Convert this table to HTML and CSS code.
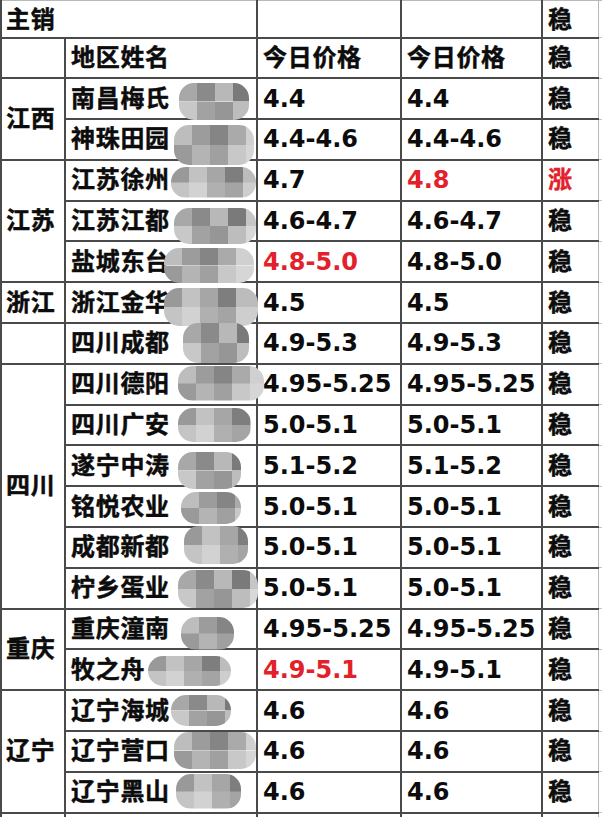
FILE: index.html
```html
<!DOCTYPE html>
<html lang="zh-CN">
<head>
<meta charset="utf-8">
<title>主销 价格表</title>
<link rel="stylesheet" href="styles.css">
</head>
<body>
<table class="sheet">
  <colgroup>
    <col class="c-prov"><col class="c-name"><col class="c-p1"><col class="c-p2"><col class="c-st"><col class="c-ext">
  </colgroup>
  <tr class="top">
    <td colspan="2" class="prov">主销</td><td></td><td></td><td class="st">稳</td><td class="ext"></td>
  </tr>
  <tr>
    <td></td><td class="name">地区姓名</td><td class="cj">今日价格</td><td class="cj">今日价格</td><td class="st">稳</td><td class="ext"></td>
  </tr>

  <tr>
    <td rowspan="2" class="prov">江西</td>
    <td class="name">南昌梅氏<span class="blob b1"></span></td><td class="n">4.4</td><td class="n">4.4</td><td class="st">稳</td><td class="ext"></td>
  </tr>
  <tr>
    <td class="name">神珠田园<span class="blob b2 m2"></span></td><td class="n">4.4-4.6</td><td class="n">4.4-4.6</td><td class="st">稳</td><td class="ext"></td>
  </tr>

  <tr>
    <td rowspan="3" class="prov">江苏</td>
    <td class="name">江苏徐州<span class="blob b3 m3"></span></td><td class="n">4.7</td><td class="n red">4.8</td><td class="st red">涨</td><td class="ext"></td>
  </tr>
  <tr>
    <td class="name">江苏江都<span class="blob b4"></span></td><td class="n">4.6-4.7</td><td class="n">4.6-4.7</td><td class="st">稳</td><td class="ext"></td>
  </tr>
  <tr>
    <td class="name">盐城东台<span class="blob b5 m2"></span></td><td class="n red">4.8-5.0</td><td class="n">4.8-5.0</td><td class="st">稳</td><td class="ext"></td>
  </tr>

  <tr>
    <td class="prov">浙江</td>
    <td class="name">浙江金华<span class="blob b6 m3"></span></td><td class="n">4.5</td><td class="n">4.5</td><td class="st">稳</td><td class="ext"></td>
  </tr>

  <tr>
    <td></td>
    <td class="name">四川成都<span class="blob b7"></span></td><td class="n">4.9-5.3</td><td class="n">4.9-5.3</td><td class="st">稳</td><td class="ext"></td>
  </tr>
  <tr>
    <td rowspan="6" class="prov">四川</td>
    <td class="name">四川德阳<span class="blob b8 m2"></span></td><td class="n">4.95-5.25</td><td class="n">4.95-5.25</td><td class="st">稳</td><td class="ext"></td>
  </tr>
  <tr>
    <td class="name">四川广安<span class="blob b9 m3"></span></td><td class="n">5.0-5.1</td><td class="n">5.0-5.1</td><td class="st">稳</td><td class="ext"></td>
  </tr>
  <tr>
    <td class="name">遂宁中涛<span class="blob b10"></span></td><td class="n">5.1-5.2</td><td class="n">5.1-5.2</td><td class="st">稳</td><td class="ext"></td>
  </tr>
  <tr>
    <td class="name">铭悦农业<span class="blob b11 m2"></span></td><td class="n">5.0-5.1</td><td class="n">5.0-5.1</td><td class="st">稳</td><td class="ext"></td>
  </tr>
  <tr>
    <td class="name">成都新都<span class="blob b12 m3"></span></td><td class="n">5.0-5.1</td><td class="n">5.0-5.1</td><td class="st">稳</td><td class="ext"></td>
  </tr>
  <tr>
    <td class="name">柠乡蛋业<span class="blob b13"></span></td><td class="n">5.0-5.1</td><td class="n">5.0-5.1</td><td class="st">稳</td><td class="ext"></td>
  </tr>

  <tr>
    <td rowspan="2" class="prov">重庆</td>
    <td class="name">重庆潼南<span class="blob b14 m2"></span></td><td class="n">4.95-5.25</td><td class="n">4.95-5.25</td><td class="st">稳</td><td class="ext"></td>
  </tr>
  <tr>
    <td class="name">牧之舟<span class="blob b15 m3"></span></td><td class="n red">4.9-5.1</td><td class="n">4.9-5.1</td><td class="st">稳</td><td class="ext"></td>
  </tr>

  <tr>
    <td rowspan="3" class="prov">辽宁</td>
    <td class="name">辽宁海城<span class="blob b16"></span></td><td class="n">4.6</td><td class="n">4.6</td><td class="st">稳</td><td class="ext"></td>
  </tr>
  <tr>
    <td class="name">辽宁营口<span class="blob b17 m2"></span></td><td class="n">4.6</td><td class="n">4.6</td><td class="st">稳</td><td class="ext"></td>
  </tr>
  <tr>
    <td class="name">辽宁黑山<span class="blob b18 m3"></span></td><td class="n">4.6</td><td class="n">4.6</td><td class="st">稳</td><td class="ext"></td>
  </tr>
  <tr>
    <td></td><td></td><td></td><td></td><td class="st"></td><td class="ext"></td>
  </tr>
</table>
</body>
</html>
```
FILE: styles.css
```css
html, body {
  margin: 0;
  padding: 0;
  background: #ffffff;
  overflow: hidden;
}

.sheet {
  border-collapse: collapse;
  table-layout: fixed;
  width: 617px;
  font-family: "DejaVu Sans", "Noto Sans CJK SC", sans-serif;
  font-weight: bold;
  font-size: 24px;
  color: #0c0c0c;
}

.c-prov { width: 64px; }
.c-name { width: 192px; }
.c-p1 { width: 144px; }
.c-p2 { width: 141px; }
.c-st { width: 56px; }
.c-ext { width: 20px; }

.sheet tr { height: 40.8px; }
.sheet tr.top { height: 37px; }

.sheet td {
  border: 2px solid #4a4a4a;
  padding: 0 0 0 5px;
  vertical-align: middle;
  white-space: nowrap;
  overflow: hidden;
  line-height: 1;
  letter-spacing: 0.7px;
  -webkit-text-stroke: 0.45px currentColor;
}

.sheet tr.top td { border-top: 1px solid #b8b8b8; padding-top: 3px; }

.sheet td.prov { padding-left: 4px; }
.sheet td.name { position: relative; overflow: visible; }
.sheet td.n { letter-spacing: 0; -webkit-text-stroke: 0; }
.sheet td.st { border-right: 1px solid #b8b8b8; padding-left: 5px; }
.sheet td.ext { border: 1px solid #c4c4c4; }

.red { color: #e3212a; }

.blob {
  position: absolute;
  border-radius: 15px;
  filter: blur(0.7px);
  background-image:
    linear-gradient(90deg, #a8a8a8 0 18px, #8a8a8a 18px 36px, #b8b8b8 36px 54px, #7a7a7a 54px 72px, #c6c6c6 72px),
    linear-gradient(90deg, #c8c8c8 0 18px, #a2a2a2 18px 36px, #969696 36px 54px, #bdbdbd 54px 72px, #d8d8d8 72px);
  background-size: 100% 50%;
  background-position: top, bottom;
  background-repeat: no-repeat;
}
.blob.m2 {
  background-image:
    linear-gradient(90deg, #bdbdbd 0 18px, #9c9c9c 18px 36px, #858585 36px 54px, #aaaaaa 54px 72px, #d0d0d0 72px),
    linear-gradient(90deg, #9a9a9a 0 18px, #b4b4b4 18px 36px, #a0a0a0 36px 54px, #c8c8c8 54px 72px, #d6d6d6 72px);
}
.blob.m3 {
  background-image:
    linear-gradient(90deg, #999999 0 18px, #c2c2c2 18px 36px, #a6a6a6 36px 54px, #7e7e7e 54px 72px, #bcbcbc 72px),
    linear-gradient(90deg, #c4c4c4 0 18px, #d2d2d2 18px 36px, #b0b0b0 36px 54px, #a4a4a4 54px 72px, #cecece 72px);
}

.b1  { left: 113px; top: 4px;  width: 70px; height: 37px; }
.b2  { left: 108px; top: 5px;  width: 80px; height: 40px; }
.b3  { left: 105px; top: 6px;  width: 85px; height: 31px; }
.b4  { left: 108px; top: 6px;  width: 82px; height: 36px; }
.b5  { left: 98px;  top: 6px;  width: 90px; height: 35px; }
.b6  { left: 98px;  top: 5px;  width: 94px; height: 38px; }
.b7  { left: 117px; top: -1px; width: 66px; height: 40px; }
.b8  { left: 112px; top: 1px;  width: 86px; height: 35px; }
.b9  { left: 112px; top: 2px;  width: 73px; height: 34px; }
.b10 { left: 112px; top: 6px;  width: 63px; height: 37px; }
.b11 { left: 115px; top: 5px;  width: 60px; height: 32px; }
.b12 { left: 118px; top: -2px; width: 64px; height: 38px; }
.b13 { left: 112px; top: 1px;  width: 80px; height: 38px; }
.b14 { left: 115px; top: 7px;  width: 53px; height: 33px; }
.b15 { left: 82px;  top: 6px;  width: 83px; height: 30px; }
.b16 { left: 105px; top: 4px;  width: 60px; height: 31px; }
.b17 { left: 108px; top: 0;    width: 82px; height: 37px; }
.b18 { left: 110px; top: 1px;  width: 65px; height: 35px; }
```
